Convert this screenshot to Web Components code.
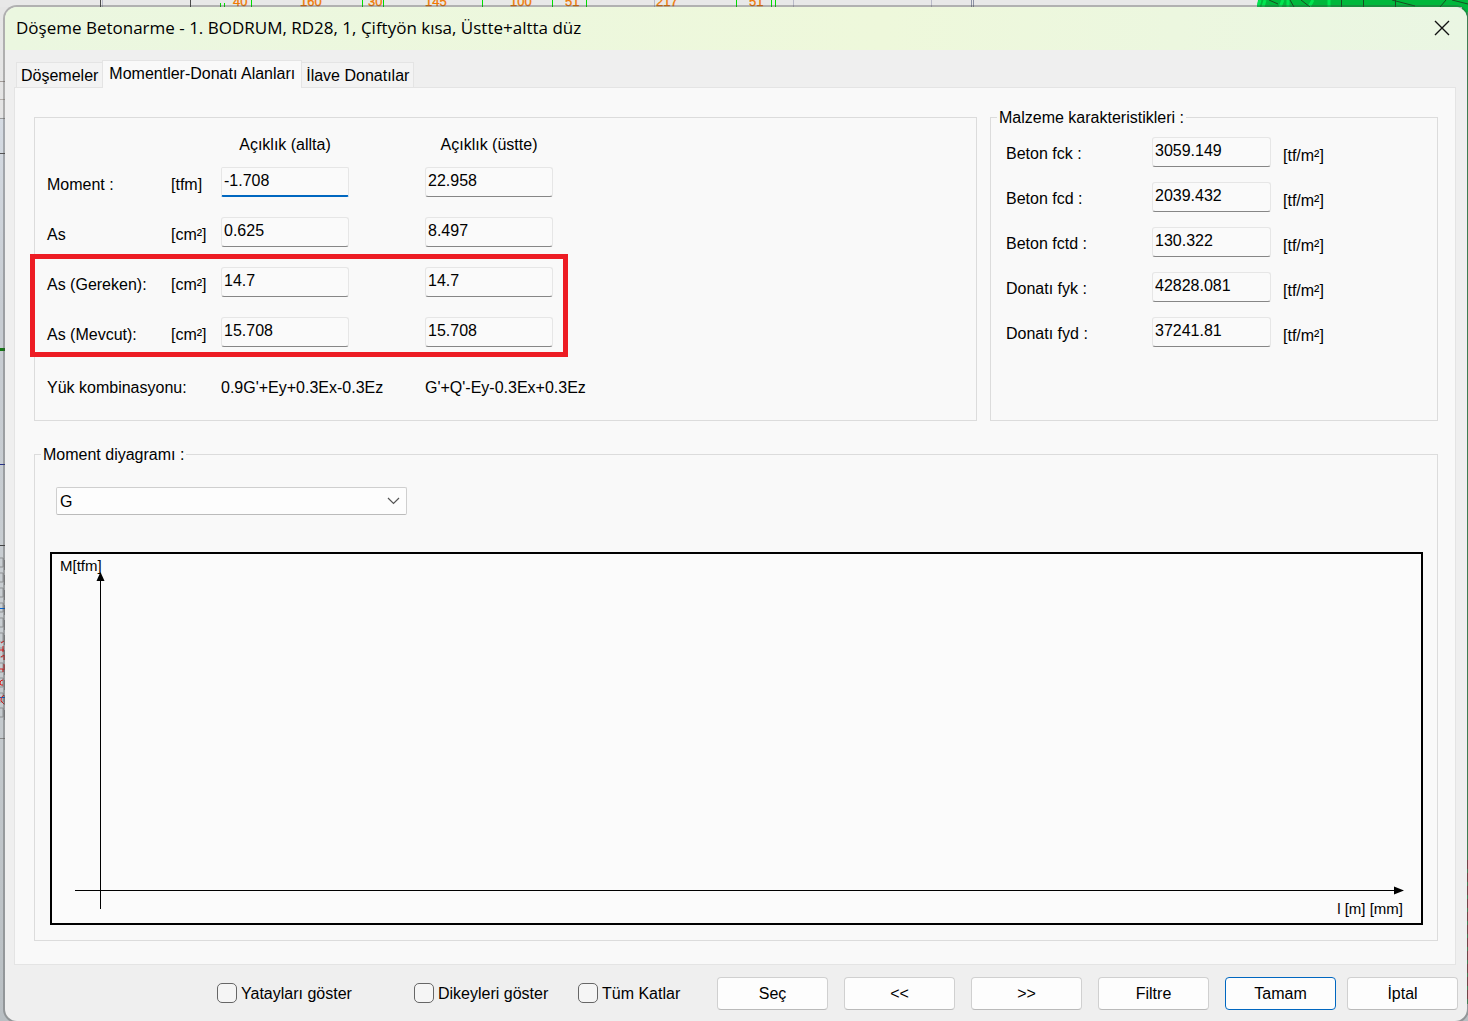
<!DOCTYPE html>
<html lang="tr">
<head>
<meta charset="utf-8">
<title>Döşeme Betonarme</title>
<style>
  body { margin: 0; min-height: 100vh; position: relative; overflow: hidden; background: #c9ced2;
    font: 16px/20px "Liberation Sans", Arial, sans-serif; color: #000; }
  main { position: relative; padding: 7px 1px 0 5px; }
  .upper { display: flex; gap: 13px; }
  .upper > :first-child { flex: 943 1 0; }
  .upper > :last-child { flex: 448 1 0; }
</style>
</head>
<body>
<cad-backdrop></cad-backdrop>
<main>
  <dialog-window heading="Döşeme Betonarme - 1. BODRUM, RD28, 1, Çiftyön kısa, Üstte+altta düz">
    <tab-strip slot="tabs" labels="Döşemeler|Momentler-Donatı Alanları|İlave Donatılar" active="1"></tab-strip>
    <div class="upper">
      <group-box name="Momentler">
        <moment-heads first="Açıklık (allta)" second="Açıklık (üstte)"></moment-heads>
        <moment-row label="Moment :" unit="[tfm]" first="-1.708" second="22.958" current></moment-row>
        <moment-row label="As" unit="[cm²]" first="0.625" second="8.497"></moment-row>
        <mark-frame>
          <moment-row label="As (Gereken):" unit="[cm²]" first="14.7" second="14.7"></moment-row>
          <moment-row label="As (Mevcut):" unit="[cm²]" first="15.708" second="15.708"></moment-row>
        </mark-frame>
        <load-row label="Yük kombinasyonu:" first="0.9G'+Ey+0.3Ex-0.3Ez" second="G'+Q'-Ey-0.3Ex+0.3Ez"></load-row>
      </group-box>
      <group-box legend="Malzeme karakteristikleri :">
        <material-list></material-list>
      </group-box>
    </div>
    <group-box class="lower" legend="Moment diyagramı :">
      <case-select></case-select>
      <moment-plot></moment-plot>
    </group-box>
    <dialog-actions slot="footer"></dialog-actions>
  </dialog-window>
</main>
<script>
const BASE = `*{box-sizing:border-box} :host{display:block} button,input,select{font:inherit;color:inherit;margin:0}
  .field{height:30px;width:100%;padding:0 2px 3px;border:1px solid #e6e6e6;border-bottom-color:#868686;border-radius:3px;background:#fafafa;outline:0;display:block}
  .field.current{border-bottom:2px solid #0067c0;padding-bottom:2px;border-radius:2px}`;

function define(name, render, ready) {
  customElements.define(name, class extends HTMLElement {
    connectedCallback() {
      if (this.shadowRoot) return;
      const root = this.attachShadow({ mode: 'open' });
      const get = key => this.getAttribute(key) || '';
      const t = document.createElement('template');
      t.innerHTML = `<style>${BASE}</style>` + render(get, this);
      root.append(t.content.cloneNode(true));
      if (ready) ready(root);
    }
  });
}

/* Drawing that shows behind the dialog's edges */
define('cad-backdrop', () => {
  const v = (xs, c, w = 1) => xs.map(x => `<path d="M${x}.5 0V7" stroke="${c}" stroke-width="${w}"/>`).join('');
  const h = list => list.map(([y, c, w = 1]) => `<path d="M0 ${y}.5H5" stroke="${c}" stroke-width="${w}"/>`).join('');
  const dims = [[233, '40'], [300, '160'], [368, '30'], [425, '145'], [510, '100'], [565, '51'], [656, '217'], [749, '51']];
  const hatch = Array.from({ length: 11 }, (_, i) => `<path d="M0 ${558 + i * 15}h3v9h-3M4.5 ${560 + i * 15}v10" stroke="#8f9193" fill="none"/>`).join('');
  return `<style>:host{position:absolute;inset:0;overflow:hidden}
    .strip{height:7px;background:#e8e8e8}
    .side{height:1014px;background:linear-gradient(#e6e6e6 0,#e4e4e4 110px,#d5dbe3 112px,#c7ccd2 300px,#c8cdd1 600px,#b9bfc3 1014px)}
    svg{position:absolute;top:0;left:0}
    .site{left:auto;right:0}
    text{font:13px "Liberation Sans",Arial,sans-serif;fill:#f07800;stroke:#f07800;stroke-width:.3px}</style>
    <div class="strip"></div><div class="side"></div>
    <svg width="1000" height="1021" aria-hidden="true">
      ${v([100, 190], '#4a4a4a')}${v([102, 654, 793, 931], '#b9bac8')}${v([971, 973], '#8d92a5')}
      <path d="M220.500 3V7M224.500 3V7" stroke="#00e000"/>
      ${v([251, 362, 383, 482, 552, 586, 736, 771, 775], '#00e000')}
      ${dims.map(([x, s]) => `<text x="${x}" y="6">${s}</text>`).join('')}
      ${h([[81, '#a39c98'], [99, '#b5b0ac'], [118, '#999'], [153, '#555'], [349, '#157815', 3], [464, '#26308c'], [545, '#444']])}
      ${hatch}${h([[608, '#0060d0'], [697, '#0060d0'], [738, '#888']])}
      <path d="M1 643l3-2M0 650h4M3 646v6M1 657l3-2v5M0 669h3v3M4 664v6M3 680q-3 0-3 3t3 2M4 695q-4 2-3 6l3 3" stroke="#d81818" fill="none"/>
    </svg>
    <svg class="site" width="211" height="1021" aria-hidden="true">
      <path d="M1 0H211V1004H205V7H0z" fill="#00b83c"/>
      <path d="M3 0l-2 7M8 0l-2 7M26 0l-3 7M31 0v7M56 0l-4 7M72 0v7" stroke="#00e650" stroke-width="3"/>
      <path d="M12 0l9 4M33 0l4 7M44 0l9 7M84.500 0V7M106.500 0V7M135 0l23 6M138.500 0V7M189 0l-6 7M195 0l16 4" stroke="#174d21" fill="none"/>
      <path d="M210.500 12V1004" stroke="#3c9a58"/><path d="M210.500 860V1000" stroke="#804848" stroke-dasharray="9 4"/>
    </svg>`;
});

define('dialog-window', get => `<style>
    :host{background:#efefef;border-radius:12px;box-shadow:0 0 0 2px rgba(70,70,70,.34);overflow:hidden}
    header{display:flex;align-items:center;justify-content:space-between;height:43px;padding:0 10px 2px 11px;
      background:linear-gradient(90deg,#ebf7e0,#eef8db 60%,#eaf6e3)}
    h1{margin:0;font:17px/24px "Open Sans","Segoe UI",sans-serif;white-space:nowrap}
    header button{width:30px;height:30px;padding:0;border:0;background:none;display:grid;place-items:center}
    .page{margin:0 11px 0 9px;padding:29px 17px 23px 19px;border:1px solid #e4e4e4;background:#f9f9f9}
    ::slotted(.lower){margin-top:33px}</style>
    <header><h1>${get('heading')}</h1>
      <button aria-label="Kapat"><svg width="16" height="16"><path d="M1 1L15 15M15 1L1 15" stroke="#111" stroke-width="1.400"/></svg></button>
    </header>
    <slot name="tabs"></slot><section class="page"><slot></slot></section><slot name="footer"></slot>`);

define('tab-strip', get => `<style>
    :host{padding:10px 0 0 11px}
    nav{display:flex;align-items:flex-end;height:28px;margin-bottom:-1px;position:relative}
    button{height:26px;padding:1px 4px 0;border:1px solid #e4e4e4;background:#f3f3f3;white-space:nowrap;line-height:22px}
    button.on{height:28px;padding:0 6px 1px;margin:0 -1px;border-bottom:0;background:#f9f9f9;position:relative}</style>
    <nav role="tablist">${get('labels').split('|').map((s, i) => {
      const on = i === +get('active');
      return `<button role="tab" aria-selected="${on}"${on ? ' class="on"' : ''}>${s}</button>`;
    }).join('')}</nav>`);

define('group-box', get => `<style>
    fieldset{height:100%;margin:0;padding:0;border:1px solid #dcdcdc;min-width:0}
    legend{height:1px;line-height:1px;margin-left:6px;padding:0 2px;white-space:nowrap}</style>
    <fieldset${get('name') ? ` aria-label="${get('name')}"` : ''}>${get('legend') ? `<legend>${get('legend')}</legend>` : ''}<slot></slot></fieldset>`);

const COLS = `.row{display:grid;grid-template-columns:124px 50px 204px 128px;padding-left:12px;white-space:nowrap}`;

define('moment-heads', get => `<style>${COLS}.row{padding-top:14px;height:39px;line-height:26px}
    span{width:128px;text-align:center}span:first-child{grid-column:3}</style>
    <div class="row"><span>${get('first')}</span><span>${get('second')}</span></div>`);

define('moment-row', (get, host) => `<style>${COLS}.row{height:50px;padding-top:10px;align-items:start}
    label,.unit{line-height:30px;padding-top:3px}.box{width:128px}</style>
    <div class="row"><label id="name" for="first">${get('label')}</label><span class="unit">${get('unit')}</span>
      <div class="box"><input id="first" class="field${host.hasAttribute('current') ? ' current' : ''}" value="${get('first')}"></div>
      <div class="box"><input aria-labelledby="name" class="field" value="${get('second')}"></div></div>`);

define('mark-frame', () => `<style>:host{position:relative;width:518px}
    :host::after{content:"";position:absolute;inset:-3px -15px 0 -5px;border:5px solid #ed1c24;pointer-events:none}</style><slot></slot>`);

define('load-row', get => `<style>${COLS}.row{height:63px;line-height:62px}span:nth-child(2){grid-column:3}</style>
    <div class="row"><span>${get('label')}</span><span>${get('first')}</span><span>${get('second')}</span></div>`);

define('material-list', () => `<style>
    :host{padding:12px 0 0 15px}
    .row{display:grid;grid-template-columns:146px 119px auto;height:45px;padding-top:7px;align-items:start}
    label,.unit{line-height:30px;padding-top:2px}.unit{padding:4px 0 0 12px}</style>
    ${[['Beton fck :', '3059.149'], ['Beton fcd :', '2039.432'], ['Beton fctd :', '130.322'], ['Donatı fyk :', '42828.081'], ['Donatı fyd :', '37241.81']]
      .map(([n, val], i) => `<div class="row"><label for="m${i}">${n}</label><input id="m${i}" class="field" value="${val}"><span class="unit">[tf/m²]</span></div>`).join('')}`);

define('case-select', () => `<style>
    :host{position:relative;width:351px;margin:32px 0 0 21px}
    select{appearance:none;display:block;width:100%;height:28px;padding:2px 28px 0 3px;border:1px solid #cfcfcf;border-bottom-color:#bbb;border-radius:2px;background:#fdfdfd}
    svg{position:absolute;right:7px;top:10px;pointer-events:none}</style>
    <select aria-label="Yükleme"><option>G</option></select>
    <svg width="13" height="8"><path d="M1 1l5.500 5.500L12 1" fill="none" stroke="#555" stroke-width="1.200"/></svg>`);

define('moment-plot', () => `<style>
    :host{margin:37px 14px 15px 15px;border:2px solid #000;background:#fbfbfb}
    svg{display:block;overflow:visible}
    text{font-size:15px}</style>
    <svg width="100%" height="369" role="img" aria-label="Moment diyagramı">
      <text x="8" y="17">M[tfm]</text>
      <path d="M48.500 20V355" stroke="#000"/><path d="M48.500 18l4 9h-8z"/>
      <line x1="23" y1="336.500" x2="98.500%" y2="336.500" stroke="#000"/>
      <svg x="100%" y="0"><path d="M-17 336.500l-10-4v8z"/><text x="-18" y="360" text-anchor="end">l [m] [mm]</text></svg>
    </svg>`);

define('dialog-actions', () => `<style>
    :host{display:flex;justify-content:flex-end;align-items:center;height:56px;padding-right:9px}
    label{display:flex;align-items:center;gap:4px;white-space:nowrap}
    label span{padding-top:2px}
    .a{width:197px}.b{width:164px}.c{width:139px}
    input{appearance:none;width:20px;height:20px;border:1px solid #666;border-radius:5px;background:#f5f5f5}
    button{width:111px;height:33px;padding:2px 0 0;border:1px solid #d0d0d0;border-bottom-color:#bababa;border-radius:4px;background:#fdfdfd}
    button+button{margin-left:16px}
    .ok{border-color:#0067c0}.ok+button{margin-left:11px}</style>
    <label class="a"><input type="checkbox"><span>Yatayları göster</span></label>
    <label class="b"><input type="checkbox"><span>Dikeyleri göster</span></label>
    <label class="c"><input type="checkbox"><span>Tüm Katlar</span></label>
    <button>Seç</button><button>&lt;&lt;</button><button>&gt;&gt;</button><button>Filtre</button><button class="ok">Tamam</button><button>İptal</button>`);
</script>
</body>
</html>
